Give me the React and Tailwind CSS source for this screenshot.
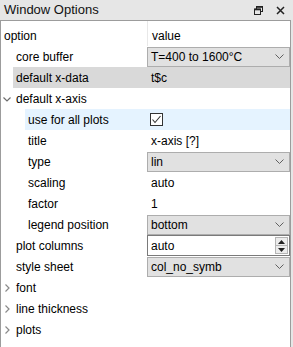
import React from 'react'

const font = { fontFamily: '"Segoe UI", "Liberation Sans", Arial, sans-serif' }

const Chevron = ({ open }) => (
    <svg width="8" height="8" viewBox="0 0 8 8" className="shrink-0">
        {open
            ? <path d="M0.5 2.5 L4 6 L7.5 2.5" fill="none" stroke="#6d6d6d" strokeWidth="1.2" />
            : <path d="M2.5 0.5 L6 4 L2.5 7.5" fill="none" stroke="#8a8a8a" strokeWidth="1.2" />}
    </svg>
)

const Combo = ({ text }) => (
    <div className="h-[20px] w-full flex items-center justify-between bg-[#e1e1e1] border border-[#adadad] pl-[3px] pr-[5px]">
        <span>{text}</span>
        <svg width="9" height="5" viewBox="0 0 9 5">
            <path d="M0.5 0.5 L4.5 4.5 L8.5 0.5" fill="none" stroke="#606060" strokeWidth="1" />
        </svg>
    </div>
)

const Spin = ({ text }) => (
    <div className="h-[21px] w-full flex items-center justify-between bg-white border border-[#7a7a7a] pl-[3px] pr-[1px]">
        <span>{text}</span>
        <div className="flex flex-col h-[17px] w-[13px] border border-[#b5b5b5] bg-[#ececec]">
            <div className="flex-1 flex items-center justify-center border-b border-[#b5b5b5]">
                <svg width="7" height="4" viewBox="0 0 7 4"><path d="M0 4 L3.5 0 L7 4 Z" fill="#202020" /></svg>
            </div>
            <div className="flex-1 flex items-center justify-center">
                <svg width="7" height="4" viewBox="0 0 7 4"><path d="M0 0 L3.5 4 L7 0 Z" fill="#202020" /></svg>
            </div>
        </div>
    </div>
)

const CheckBox = () => (
    <div className="w-[13px] h-[13px] border border-[#333333] bg-white flex items-center justify-center">
        <svg width="11" height="11" viewBox="0 0 11 11">
            <path d="M1.5 5.5 L4 8.5 L9.5 2" fill="none" stroke="#333333" strokeWidth="1.1" />
        </svg>
    </div>
)

// one tree row: indent decides where the label (and its highlight band) starts
const Row = ({ depth = 0, label, value, bg = '', expander }) => {
    const textX = depth === 0 ? 16 : 28
    const bandX = textX - 3
    return (
        <div className="h-[21px] flex items-stretch">
            <div className="relative shrink-0" style={{ width: bandX - 1 }}>
                {expander && (
                    <div className="absolute left-[2px] top-0 h-full flex items-center">
                        <Chevron open={expander === 'open'} />
                    </div>
                )}
            </div>
            <div className={`flex-1 flex items-stretch ${bg}`}>
                <div className="shrink-0 flex items-center pl-[3px]" style={{ width: 147 - bandX }}>
                    {label}
                </div>
                <div className="flex-1 flex items-center min-w-0">
                    {value}
                </div>
            </div>
        </div>
    )
}

const Val = ({ children }) => <span className="pl-[4px]">{children}</span>

export default function App() {
    return (
        <div className="w-[293px] h-[347px] bg-[#e6e6e6] flex flex-col text-[12px] text-black overflow-hidden" style={font}>
            <div className="h-[20px] shrink-0 flex items-center justify-between pl-[4px] pr-[8px]">
                <span className="text-[13px] text-[#111111]">Window Options</span>
                <div className="flex items-center gap-[13px]">
                    <svg width="9" height="9" viewBox="0 0 9 9">
                        <rect x="2.5" y="0.5" width="6" height="5" fill="none" stroke="#222" strokeWidth="1" />
                        <rect x="0.5" y="3" width="6" height="5.5" fill="#e6e6e6" stroke="#222" strokeWidth="1" />
                        <path d="M0.5 3.5 H6.5" stroke="#222" strokeWidth="1.6" />
                        <path d="M2.5 1 H8.5" stroke="#222" strokeWidth="1.6" />
                    </svg>
                    <svg width="9" height="9" viewBox="0 0 9 9">
                        <path d="M1 1 L8 8 M8 1 L1 8" stroke="#222" strokeWidth="1.5" />
                    </svg>
                </div>
            </div>
            <div className="flex-1 mr-[2px] bg-white border-l border-r border-t border-[#9c9c9c]">
                <div className="h-[25px] flex items-stretch">
                    <div className="w-[146px] shrink-0 flex items-center pl-[3px] pt-[4px]">option</div>
                    <div className="flex-1 flex items-center pl-[4px] pt-[4px] border-l border-[#e8e8e8]">value</div>
                </div>
                <Row label="core buffer" value={<Combo text="T=400 to 1600°C" />} />
                <Row label="default x-data" value={<Val>t$c</Val>} bg="bg-[#d9d9d9]" />
                <Row label="default x-axis" expander="open" />
                <Row depth={1} label="use for all plots" value={<div className="pl-[3px]"><CheckBox /></div>} bg="bg-[#e5f3ff]" />
                <Row depth={1} label="title" value={<Val>x-axis [?]</Val>} />
                <Row depth={1} label="type" value={<Combo text="lin" />} />
                <Row depth={1} label="scaling" value={<Val>auto</Val>} />
                <Row depth={1} label="factor" value={<Val>1</Val>} />
                <Row depth={1} label="legend position" value={<Combo text="bottom" />} />
                <Row label="plot columns" value={<Spin text="auto" />} />
                <Row label="style sheet" value={<Combo text="col_no_symb" />} />
                <Row label="font" expander="closed" />
                <Row label="line thickness" expander="closed" />
                <Row label="plots" expander="closed" />
            </div>
        </div>
    )
}
